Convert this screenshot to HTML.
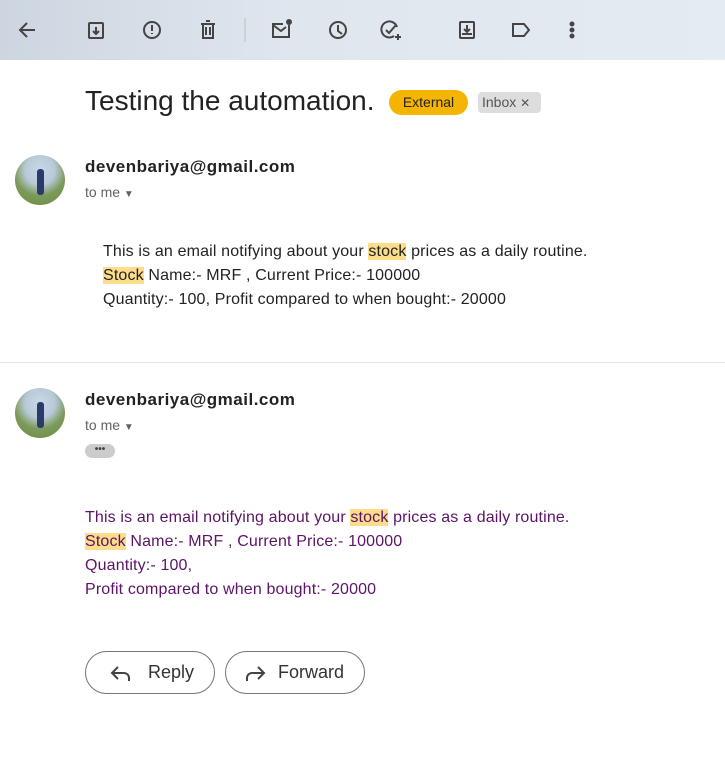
<!DOCTYPE html>
<html><head><style>
body{margin:0;width:725px;height:763px;background:#fff;font-family:"Liberation Sans",sans-serif;position:relative;overflow:hidden}
.top{position:absolute;left:0;top:0;width:725px;height:60px;background:linear-gradient(90deg,#cdd6e0,#dfe6ee 40%,#e4ebf3);}
.a{position:absolute}
.sender{font-size:17px;font-weight:bold;color:#222;letter-spacing:.5px}
.tome{font-size:14px;color:#5f6368}
.av{position:absolute;width:50px;height:50px;border-radius:50%;background:radial-gradient(circle at 50% 30%,#c8d8e8 0,#b8c9d8 35%,#7c9a5a 60%,#6c8a40 100%);overflow:hidden}
.av:after{content:"";position:absolute;left:22px;top:14px;width:7px;height:26px;background:#2a3a6a;border-radius:3px}
.body{font-size:16px;line-height:24px;color:#222;letter-spacing:.15px}
.hl{background:#fddc8a}
.btn{position:absolute;top:651px;height:43px;border:1px solid #747775;border-radius:22px;font-size:18px;color:#333;box-sizing:border-box;display:flex;align-items:center}
</style></head><body>
<div class="top">
<svg width="725" height="60" style="position:absolute;left:0;top:0" fill="none" stroke="#444" stroke-width="2">
<path d="M35 30H20M27 23l-7 7 7 7"/>
<rect x="89" y="23" width="14" height="15" rx="1"/><path d="M96 27v7M93 31l3 3 3-3"/>
<circle cx="152" cy="30" r="8"/><path d="M152 25v6M152 33v1"/>
<path d="M201 24h14M203 24v14h10V24M206 21h4M206 27v8M210 27v8"/>
<path d="M245 18v24" stroke="#bbb" stroke-width="1"/>
<path d="M289 25v12h-16V24h10M273 25l8 6 5-4"/><circle cx="289" cy="22" r="3" fill="#444" stroke="none"/>
<circle cx="338" cy="30" r="8"/><path d="M338 25v6l4 3"/>
<path d="M397 27a8 8 0 1 0-3 9M386 30l3 3 7-8M398 34v6M395 37h6"/>
<rect x="460" y="22" width="14" height="16" rx="1"/><path d="M467 25v7M464 29l3 3 3-3M462 34h10"/>
<path d="M513 24h11l5 6-5 6h-11z"/>
<circle cx="572" cy="24" r="1.5" fill="#444"/><circle cx="572" cy="30" r="1.5" fill="#444"/><circle cx="572" cy="36" r="1.5" fill="#444"/>
</svg></div>
<div class="a" style="left:85px;top:85px;font-size:28px;color:#222">Testing the automation.</div>
<div class="a" style="left:389px;top:90px;width:79px;height:25px;border-radius:13px;background:#f5b400;font-size:14px;color:#222;text-align:center;line-height:25px">External</div>
<div class="a" style="left:478px;top:92px;width:63px;height:21px;border-radius:4px;background:#ddd;font-size:14px;color:#555;line-height:21px;padding-left:4px;box-sizing:border-box">Inbox <span style="font-size:12px">✕</span></div>

<div class="av" style="left:15px;top:155px"></div>
<div class="a sender" style="left:85px;top:157px">devenbariya@gmail.com</div>
<div class="a tome" style="left:85px;top:184px">to me <span style="font-size:10px">▼</span></div>
<div class="a body" style="left:103px;top:240px">This is an email notifying about your <span class="hl">stock</span> prices as a daily routine.<br><span class="hl">Stock</span> Name:- MRF , Current Price:- 100000<br>Quantity:- 100, Profit compared to when bought:- 20000</div>
<div class="a" style="left:0;top:362px;width:725px;height:1px;background:#e3e3e3"></div>

<div class="av" style="left:15px;top:388px"></div>
<div class="a sender" style="left:85px;top:390px">devenbariya@gmail.com</div>
<div class="a tome" style="left:85px;top:417px">to me <span style="font-size:10px">▼</span></div>
<div class="a" style="left:85px;top:444px;width:30px;height:14px;border-radius:7px;background:#ccc;font-size:10px;line-height:12px;text-align:center;color:#444;font-weight:bold">•••</div>
<div class="a body" style="left:85px;top:506px;color:#5b1466">This is an email notifying about your <span class="hl">stock</span> prices as a daily routine.<br><span class="hl">Stock</span> Name:- MRF , Current Price:- 100000<br>Quantity:- 100,<br>Profit compared to when bought:- 20000</div>

<div class="btn" style="left:85px;width:130px;padding-left:24px"><svg width="22" height="18" fill="none" stroke="#444" stroke-width="2" style="margin-right:16px"><path d="M8 3L2 9l6 6M2 9h12a5 5 0 0 1 5 5v3"/></svg>Reply</div>
<div class="btn" style="left:225px;width:140px;padding-left:18px"><svg width="22" height="18" fill="none" stroke="#444" stroke-width="2" style="margin-right:12px"><path d="M14 3l6 6-6 6M20 9H8a5 5 0 0 0-5 5v3"/></svg>Forward</div>
</body></html>
